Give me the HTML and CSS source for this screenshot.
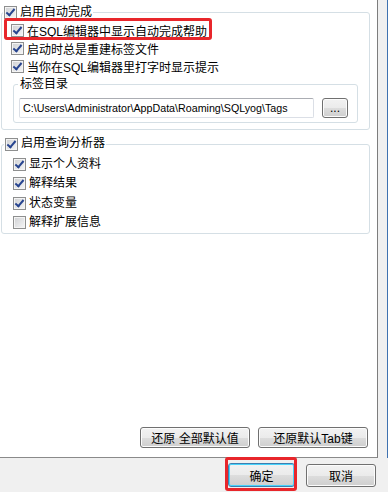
FILE: index.html
```html
<!DOCTYPE html>
<html lang="zh-CN">
<head>
  <meta charset="UTF-8">
  <title>自动完成选项</title>
  <link rel="stylesheet" href="styles.css">
</head>
<body>
  <div class="window">
    <div class="main">
      <div class="panel">
        <!-- 自动完成 -->
        <fieldset class="group first">
          <legend><label class="check"><span class="box on"></span>启用自动完成</label></legend>
          <label class="check row"><span class="box on"></span>在SQL编辑器中显示自动完成帮助</label>
          <label class="check row"><span class="box on"></span>启动时总是重建标签文件</label>
          <label class="check row"><span class="box on"></span>当你在SQL编辑器里打字时显示提示</label>
          <fieldset class="group tags">
            <legend>标签目录</legend>
            <div class="path-row">
              <input class="path" type="text" value="C:\Users\Administrator\AppData\Roaming\SQLyog\Tags">
              <button class="btn dots">...</button>
            </div>
          </fieldset>
        </fieldset>

        <!-- 查询分析器 -->
        <fieldset class="group second">
          <legend><label class="check"><span class="box on"></span>启用查询分析器</label></legend>
          <label class="check row"><span class="box on"></span>显示个人资料</label>
          <label class="check row"><span class="box on"></span>解释结果</label>
          <label class="check row"><span class="box on"></span>状态变量</label>
          <label class="check row"><span class="box"></span>解释扩展信息</label>
        </fieldset>

        <div class="reset-row">
          <button class="btn wide">还原 全部默认值</button>
          <button class="btn wide">还原默认Tab键</button>
        </div>
      </div>
      <div class="strip"></div>
    </div>

    <div class="footer">
      <button class="btn ok">确定</button>
      <button class="btn cancel">取消</button>
    </div>

    <!-- red annotation marks -->
    <div class="mark mark-row"></div>
    <div class="mark mark-ok"></div>
  </div>
</body>
</html>
```

FILE: styles.css
```css
/* General */
body {
  margin: 0;
  font-family: "Liberation Sans", "Noto Sans CJK SC", sans-serif;
  font-size: 12px;
  color: #000;
  background-color: #f0f0f0;
}

.window {
  position: relative;
  width: 388px;
  height: 492px;
  overflow: hidden;
}

.main {
  display: flex;
  height: 458px;
}

.panel {
  display: flex;
  flex-direction: column;
  width: 377px;
  background-color: #fff;
  border-right: 1px solid #7d7d7d;
  border-bottom: 1px solid #8a8a8a;
}

.strip {
  width: 9px;
  background-color: #f0f0f0;
  border-right: 1px solid #3f72b0;
}

/* Group boxes */
.group {
  margin: 0;
  border: 1px solid #d5dfe5;
  border-radius: 3px;
  min-inline-size: 0;
}

.group legend {
  padding: 0 1px;
  line-height: 18px;
}

.first {
  margin: 3px 7px 0 1px;
  padding: 0 10px 6px 1px;
}

.second {
  margin: 5px 7px 0 1px;
  padding: 0 10px 0 2px;
}

.second legend,
.second .row {
  line-height: 19.5px;
  height: 19.5px;
}

.tags {
  margin: 0 1px 0 10px;
  padding: 5px 8px 4px 5px;
}

.tags legend {
  padding: 0 2px;
  margin-left: -1px;
}

/* Checkboxes */
.check {
  display: flex;
  align-items: center;
  gap: 3px;
  height: 18px;
  white-space: nowrap;
}

.row {
  margin-left: 8px;
}

.second .row {
  margin-left: 9px;
}

.box {
  position: relative;
  flex: none;
  width: 11px;
  height: 11px;
  border: 1px solid #8e8f8f;
  background: linear-gradient(135deg, #cfd0d2 0%, #e4e5e7 55%, #f6f6f6 100%);
  box-shadow: inset 0 0 0 1px #f4f4f4;
}

.box.on::after {
  content: "";
  position: absolute;
  left: 3px;
  top: 0px;
  width: 3px;
  height: 7px;
  border: solid #27448f;
  border-width: 0 2px 2px 0;
  transform: rotate(40deg);
}

/* Path input */
.path-row {
  display: flex;
  align-items: center;
  gap: 8px;
}

.path {
  width: 295px;
  height: 20px;
  box-sizing: border-box;
  margin: 0;
  padding: 0 3px;
  border: 1px solid #dbdfe6;
  border-top-color: #abadb3;
  border-radius: 2px;
  font-family: "Liberation Sans", sans-serif;
  font-size: 10.7px;
  color: #000;
  background-color: #fff;
}

/* Buttons */
.btn {
  box-sizing: border-box;
  margin: 0;
  padding: 0;
  border: 1px solid #707070;
  border-radius: 3px;
  background: linear-gradient(#f2f2f2 0%, #ebebeb 50%, #dddddd 51%, #cfcfcf 100%);
  box-shadow: inset 0 0 0 1px #fcfcfc;
  font-family: "Liberation Sans", "Noto Sans CJK SC", sans-serif;
  font-size: 12px;
  color: #000;
}

.dots {
  width: 26px;
  height: 20px;
  line-height: 14px;
}

.reset-row {
  display: flex;
  gap: 8px;
  margin: auto 9px 9px 0;
  align-self: flex-end;
}

.wide {
  width: 110px;
  height: 21px;
}

.footer {
  display: flex;
  justify-content: flex-end;
  align-items: center;
  gap: 11px;
  height: 34px;
  padding-right: 12px;
}

.ok {
  width: 67px;
  height: 24px;
  border-color: #3c7fb1;
  box-shadow: inset 0 0 0 1px #48d3fb;
}

.cancel {
  width: 70px;
  height: 23px;
}

/* Annotation marks */
.mark {
  position: absolute;
  border: 3px solid #e8262b;
  border-radius: 3px;
  box-sizing: border-box;
}

.mark-row {
  left: 4px;
  top: 18px;
  width: 208px;
  height: 22px;
}

.mark-ok {
  left: 225px;
  top: 457px;
  width: 72px;
  height: 34px;
}
```
